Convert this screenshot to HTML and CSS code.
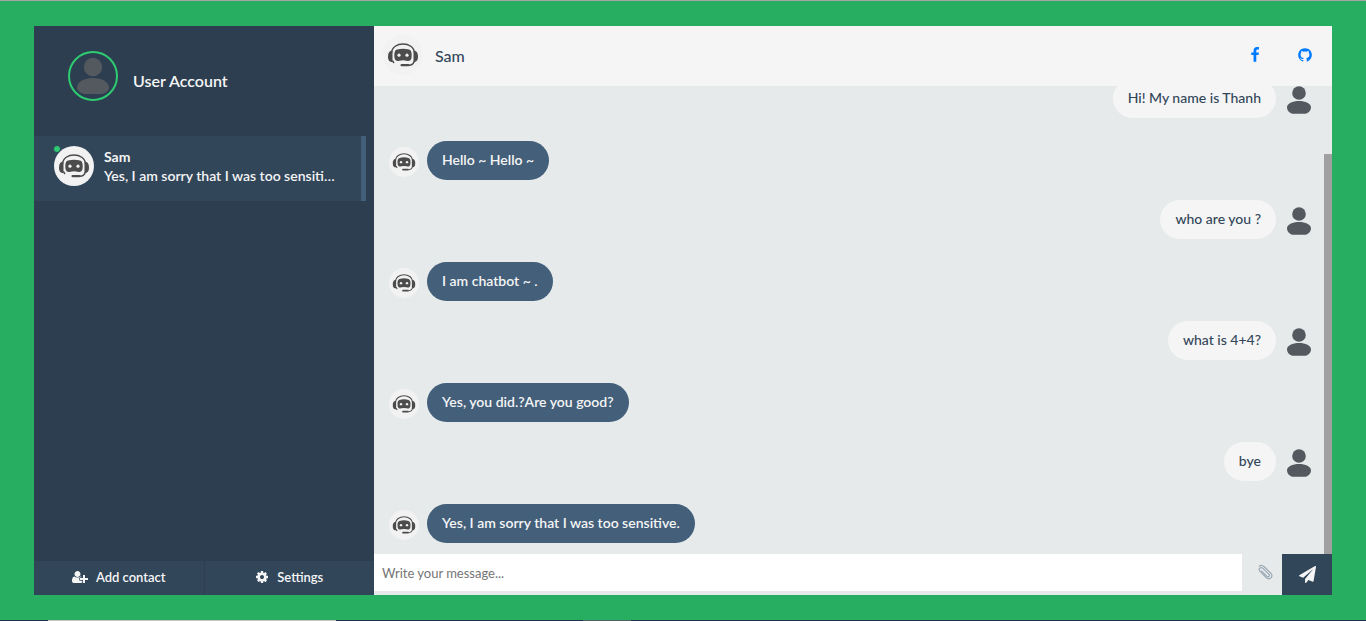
FILE: index.html
```
<!DOCTYPE html>
<html lang="en">
<head>
<meta charset="utf-8">
<title>Chat</title>
<link rel="stylesheet" href="styles.css">
</head>
<body>
<svg class="defs" aria-hidden="true">
  <symbol id="bot" viewBox="0 0 40 40">
    <circle cx="20" cy="20" r="20" fill="#f2f2f2"/>
    <path d="M8.500 18C9 6 31 6 31.500 18" fill="none" stroke="#4c4c4c" stroke-width="1.500"/>
    <path d="M9.500 15.500v11.500c-3 0-4.500-1.500-4.500-5.500s1.500-6 4.500-6zM30.500 15.500v11.500c3 0 4.500-1.500 4.500-5.500s-1.500-6-4.500-6z" fill="#4c4c4c"/>
    <path d="M9.300 25.500l1.700 2.500M31.300 26c-.6 3-2.300 4.200-5.500 4.200" fill="none" stroke="#4c4c4c" stroke-width="1.400"/>
    <path d="M14 14.500q6-1.400 12 0 2.500.5 2.700 5 .1 5-1.700 6-1.300.8-3.500.2-3.500-.7-7 0-2.200.6-3.500-.2-1.800-1-1.700-6 .2-4.500 2.700-5z" fill="#4c4c4c"/>
    <rect x="17.500" y="29" width="9" height="2.300" rx="1.100" fill="#4c4c4c"/>
    <circle cx="16" cy="20.200" r="1.600" fill="#f2f2f2"/>
    <circle cx="24" cy="20.200" r="1.600" fill="#f2f2f2"/>
  </symbol>
  <symbol id="person" viewBox="0 0 30 30">
    <circle cx="15" cy="8" r="6.800" fill="#54595f"/>
    <path d="M3 22.500C3 18.500 8.500 16 15 16s12 2.500 12 6.500c0 2.500-1.800 4.700-4 5.700Q22 28.700 20 28.700H10q-2 0-3-.5c-2.200-1-4-3.200-4-5.700z" fill="#54595f"/>
  </symbol>
</svg>
<div class="page">
  <div class="frame">
    <aside class="sidebar">
      <header class="profile">
        <span class="profile-photo"><svg viewBox="0 0 46 46" aria-hidden="true"><circle cx="23" cy="14" r="9.200"/><path d="M7 34.500C7 29 14 25 23 25s16 4 16 9.500c0 3-4 6.500-8 6.500H15c-4 0-8-3.500-8-6.500z"/></svg></span>
        <p class="profile-name">User Account</p>
      </header>
      <ul class="contacts">
        <li class="contact">
          <span class="contact-photo"><svg aria-hidden="true"><use href="#bot"/></svg><i class="status"></i></span>
          <div class="contact-text">
            <p class="contact-name">Sam</p>
            <p class="preview">Yes, I am sorry that I was too sensitive.</p>
          </div>
        </li>
      </ul>
      <footer class="actions">
        <button type="button"><svg class="icon-wide" viewBox="0 0 2048 1792" aria-hidden="true"><path d="M704 896q-159 0-271.500-112.500T320 512t112.500-271.500T704 128t271.500 112.500T1088 512 975.500 783.500 704 896zm960 128h352q13 0 22.500 9.500t9.500 22.500v192q0 13-9.500 22.500t-22.500 9.500h-352v352q0 13-9.500 22.500t-22.500 9.500h-192q-13 0-22.500-9.500t-9.500-22.500v-352h-352q-13 0-22.500-9.500t-9.500-22.500v-192q0-13 9.500-22.500t22.500-9.500h352V672q0-13 9.500-22.500t22.500-9.500h192q13 0 22.500 9.500t9.500 22.500v352zm-736 224q0 52 38 90t90 38h256v238q-68 50-171 50H267q-121 0-194-69T0 1405q0-53 3.500-103.500t14-109T44 1084t43-97.500 62-81 85.500-53.500T346 832q19 0 39 17 79 61 154.500 91.500T704 971t164.500-30.500T1023 849q20-17 39-17 132 0 217 96h-223q-52 0-90 38t-38 90v192z"/></svg>Add contact</button>
        <button type="button"><svg class="icon" viewBox="0 0 1792 1792" aria-hidden="true"><path d="M1152 896q0-106-75-181t-181-75-181 75-75 181 75 181 181 75 181-75 75-181zm512-109v222q0 12-8 23t-20 13l-185 28q-19 54-39 91 35 50 107 138 10 12 10 25t-9 23q-27 37-99 108t-94 71q-12 0-26-9l-138-108q-44 23-91 38-16 136-29 186-7 28-36 28h-222q-14 0-24.500-8.500t-11.500-21.500l-28-184q-49-16-90-37l-141 107q-10 9-25 9-14 0-25-11-126-114-165-168-7-10-7-23 0-12 8-23 15-21 51-66.500t54-70.500q-27-50-41-99l-183-27q-13-2-21-12.500t-8-23.500v-222q0-12 8-23t19-13l186-28q14-46 39-92-40-57-107-138-10-12-10-24 0-10 9-23 26-36 98.500-107.500t94.500-71.500q13 0 26 10l138 107q44-23 91-38 16-136 29-186 7-28 36-28h222q14 0 24.500 8.500t11.500 21.500l28 184q49 16 90 37l142-107q9-9 24-9 13 0 25 10 129 119 165 170 7 8 7 22 0 12-8 23-15 21-51 66.500t-54 70.500q26 50 41 98l183 28q13 2 21 12.500t8 23.500z"/></svg>Settings</button>
      </footer>
    </aside>
    <main class="chat">
      <header class="chat-head">
        <svg class="chat-photo" aria-hidden="true"><use href="#bot"/></svg>
        <p class="chat-name">Sam</p>
        <nav class="social">
          <a href="#" aria-label="Facebook"><svg viewBox="0 0 1792 1792"><path d="M1343 12v264h-157q-86 0-116 36t-30 108v189h293l-39 296h-254v759H734V905H479V609h255V391q0-186 104-288.500T1115 0q147 0 228 12z"/></svg></a>
          <a href="#" aria-label="GitHub"><svg viewBox="0 0 1792 1792"><path d="M896 128q209 0 385.500 103T1561 510.500 1664 896q0 251-146.500 451.500T1139 1625q-27 5-40-7t-13-30q0-3 .5-76.500t.5-134.500q0-97-52-142 57-6 102.500-18t94-39 81-66.500 53-105T1386 856q0-119-79-206 37-91-8-204-28-9-81 11t-92 44l-38 24q-93-26-192-26t-192 26q-16-11-42.500-27T578 459.500 492 446q-45 113-8 204-79 87-79 206 0 85 20.500 150t52.500 105 80.500 67 94 39 102.500 18q-39 36-49 103-21 10-45 15t-57 5-65.500-21.500T483 1274q-19-32-48.500-52t-49.500-24l-20-3q-21 0-29 4.500t-5 11.500 9 14 13 12l7 5q22 10 43.500 38t31.500 51l10 23q13 38 44 61.500t67 30 69.500 7 55.500-3.500l23-4q0 38 .5 88.500t.5 54.500q0 18-13 30t-40 7q-232-77-378.500-277.500T128 896q0-209 103-385.500T510.500 231 896 128z"/></svg></a>
        </nav>
      </header>
      <div class="log">
        <ul class="messages">
          <li class="message mine"><svg aria-hidden="true"><use href="#person"/></svg><p>Hi! My name is Thanh</p></li>
          <li class="message"><svg aria-hidden="true"><use href="#bot"/></svg><p>Hello ~ Hello ~</p></li>
          <li class="message mine"><svg aria-hidden="true"><use href="#person"/></svg><p>who are you ?</p></li>
          <li class="message"><svg aria-hidden="true"><use href="#bot"/></svg><p>I am chatbot ~ .</p></li>
          <li class="message mine"><svg aria-hidden="true"><use href="#person"/></svg><p>what is 4+4?</p></li>
          <li class="message"><svg aria-hidden="true"><use href="#bot"/></svg><p>Yes, you did.?Are you good?</p></li>
          <li class="message mine"><svg aria-hidden="true"><use href="#person"/></svg><p>bye</p></li>
          <li class="message"><svg aria-hidden="true"><use href="#bot"/></svg><p>Yes, I am sorry that I was too sensitive.</p></li>
        </ul>
        <i class="scroll-thumb"></i>
      </div>
      <form class="composer">
        <input type="text" placeholder="Write your message..." aria-label="Message">
        <button class="attach" type="button" aria-label="Attach a file"><svg viewBox="0 0 16 16"><path d="M4.500 6.800l5.300 5.300c1.600 1.500 3.400-.3 2-1.900L6 4.400C3.600 2.200.8 5 3 7.400l6.200 6.100c3.600 3.200 7.600-.8 4.500-4.400L7.200 2.700C5.600 1.200 3.800.9 2.300 2.100"/></svg></button>
        <button class="send" type="submit" aria-label="Send"><svg viewBox="0 0 1792 1792"><path d="M1764 11q33 24 27 64l-256 1536q-5 29-32 45-14 8-31 8-11 0-24-5l-453-185-242 295q-18 23-49 23-13 0-22-4-19-7-30.500-23.500t-11.500-36.500v-349l864-1059-1069 925-395-162q-37-14-40-55-2-40 32-59L1696 9q15-9 32-9 20 0 36 11z"/></svg></button>
      </form>
    </main>
  </div>
  <div class="bottom-edge"><i class="edge-light"></i><i class="edge-mid"></i></div>
</div>
</body>
</html>
```
FILE: styles.css
```
* { box-sizing: border-box; }
body, p, ul { margin: 0; padding: 0; }
ul { list-style: none; }
svg { display: block; flex: none; }
button { border: 0; padding: 0; font: inherit; color: inherit; cursor: pointer; }

body {
  font-family: Lato, "Open Sans", sans-serif;
  font-size: 14px;
  line-height: 19px;
  color: #32465a;
}
.defs { position: absolute; width: 0; height: 0; }

.page {
  display: flex;
  flex-direction: column;
  height: 100vh;
  background: #27ae60;
  border-top: 1px solid #a5a5a5;
}
.frame {
  flex: 1;
  min-height: 0;
  display: flex;
  margin: 25px 34px;
  background: #e6eaea;
}
.bottom-edge {
  display: flex;
  height: 1px;
  margin-top: auto;
  padding-left: 48px;
  gap: 247px;
  background: #1d3347;
}
.edge-light { width: 288px; background: #c9c0c4; }
.edge-mid { width: 48px; background: #4c6268; }

.sidebar {
  flex: none;
  width: 340px;
  display: flex;
  flex-direction: column;
  background: #2c3e50;
  color: #f5f5f5;
  font-weight: 600;
}
.profile {
  display: flex;
  align-items: center;
  gap: 15px;
  height: 110px;
  padding: 0 34px 10px;
}
.profile-photo {
  width: 50px;
  height: 50px;
  border: 2px solid #2ecc71;
  border-radius: 50%;
  fill: #54595f;
}
.profile-name { padding-top: 8px; font-size: 16px; }
.contacts { flex: 1; }
.contact {
  display: flex;
  gap: 10px;
  height: 65px;
  margin-right: 8px;
  padding: 10px 20px;
  background: #32465a;
  border-right: 5px solid #435f7a;
}
.contact-photo { position: relative; flex: none; }
.contact-photo svg { width: 40px; height: 40px; }
.status {
  position: absolute;
  top: -1px;
  left: -1px;
  width: 8px;
  height: 8px;
  border: 1px solid #32465a;
  border-radius: 50%;
  background: #2ecc71;
}
.contact-text { min-width: 0; padding-top: 1px; }
.contact-name { font-weight: 700; }
.preview { overflow: hidden; white-space: nowrap; text-overflow: ellipsis; }
.actions { display: flex; gap: 1px; }
.actions button {
  flex: 1;
  display: flex;
  align-items: center;
  justify-content: center;
  gap: 8px;
  height: 34px;
  padding-bottom: 2px;
  background: #32465a;
  fill: #f5f5f5;
  font-size: 13px;
}
.icon { width: 14px; height: 14px; }
.icon-wide { width: 16px; height: 14px; }

.chat { flex: 1; min-width: 0; display: flex; flex-direction: column; }
.chat-head {
  display: flex;
  align-items: center;
  height: 60px;
  padding: 0 19px 2px 9px;
  background: #f5f5f5;
}
.chat-photo { width: 40px; height: 40px; margin-right: 12px; }
.chat-name { flex: 1; font-size: 16px; font-weight: 500; }
.social { display: flex; gap: 34px; fill: #007bff; }
.social svg { width: 16px; height: 16px; }

.log { position: relative; flex: 1; min-height: 0; overflow: hidden; }
.messages {
  display: flex;
  flex-direction: column;
  justify-content: flex-end;
  height: 100%;
  padding: 0 18px 11px 15px;
}
.message { display: flex; gap: 8px; margin-top: 23px; }
.message svg { width: 30px; height: 30px; margin-top: 6px; }
.message p {
  padding: 9px 15px 11px;
  border-radius: 20px;
  background: #435f7a;
  color: #f5f5f5;
  font-weight: 600;
}
.mine { flex-direction: row-reverse; margin-top: 20px; }
.mine p { background: #f5f5f5; color: #32465a; font-weight: 500; }
.scroll-thumb {
  position: absolute;
  right: 0;
  bottom: 0;
  width: 8px;
  height: 400px;
  background: #a0a0a0;
}

.composer { display: flex; height: 41px; }
.composer input {
  flex: 1;
  min-width: 0;
  height: 37px;
  padding: 0 8px;
  border: 0;
  background: #fff;
  font: inherit;
  font-size: 13px;
  color: #32465a;
}
.composer input::placeholder { color: #757575; opacity: 1; }
.attach {
  display: flex;
  width: 40px;
  height: 37px;
  align-items: center;
  justify-content: center;
  padding: 0 0 2px 6px;
  background: none;
}
.attach svg { width: 16px; height: 16px; fill: none; stroke: #9aa8b5; stroke-width: 1.2; stroke-linecap: round; }
.send {
  display: flex;
  width: 50px;
  align-items: center;
  justify-content: center;
  background: #32465a;
  fill: #f5f5f5;
}
.send svg { width: 17px; height: 17px; }
```
